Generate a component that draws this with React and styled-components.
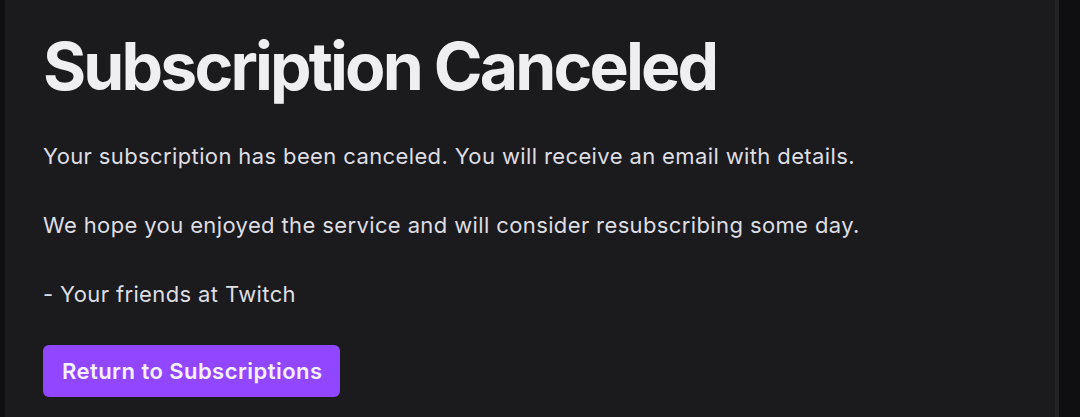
import React from "react";
import styled, { createGlobalStyle } from "styled-components";

const GlobalStyle = createGlobalStyle`
  html, body {
    margin: 0;
    padding: 0;
    background: #0f0f11;
  }
`;

function App() {
  return (
    <>
      <GlobalStyle />
      <Page>
        <Panel>
          <Title>Subscription Canceled</Title>
          <Text>Your subscription has been canceled. You will receive an email with details.</Text>
          <Text>We hope you enjoyed the service and will consider resubscribing some day.</Text>
          <Text>- Your friends at Twitch</Text>
          <Button>Return to Subscriptions</Button>
        </Panel>
      </Page>
    </>
  );
}

export default App;

const Page = styled.div`
  width: 1080px;
  height: 417px;
  display: flex;
  padding-left: 5px;
  box-sizing: border-box;
  background: #0f0f11;
  overflow: hidden;
`;

const Panel = styled.div`
  width: 1054px;
  background: #1b1b1e;
  border-right: 4px solid #232326;
  display: flex;
  flex-direction: column;
  align-items: flex-start;
  padding: 26px 0 0 38px;
  box-sizing: border-box;
  font-family: Inter, "Noto Sans", sans-serif;
`;

const Title = styled.h1`
  margin: 0 0 37px;
  font-size: 66px;
  line-height: 80px;
  font-weight: 700;
  color: #efeff1;
  letter-spacing: -2.85px;
`;

const Text = styled.p`
  margin: 0;
  font-size: 22px;
  line-height: 26px;
  color: #dedee3;
  letter-spacing: 0.38px;

  & + & {
    margin-top: 43px;
  }
`;

const Button = styled.button`
  margin-top: 38px;
  border: none;
  border-radius: 6px;
  background: #9147ff;
  color: #f7f0ff;
  font-family: Inter, "Noto Sans", sans-serif;
  font-size: 22px;
  font-weight: 600;
  letter-spacing: 0.45px;
  height: 52px;
  padding: 0 18px 0 19px;
  cursor: pointer;
`;
